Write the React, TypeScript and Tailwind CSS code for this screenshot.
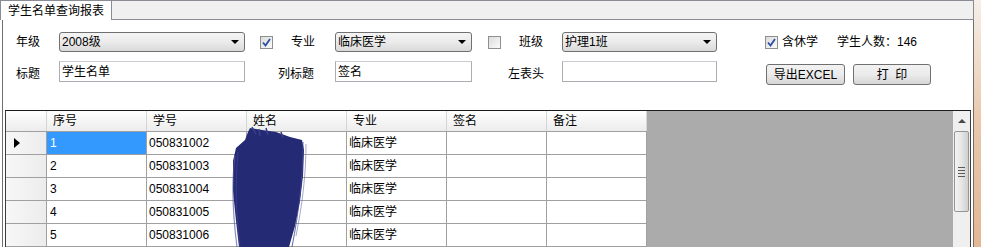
import React from 'react';

const font = "font-['Liberation_Sans','Noto_Sans_CJK_SC',sans-serif]";

const rows = [
  { no: '1', id: '050831002' },
  { no: '2', id: '050831003' },
  { no: '3', id: '050831004' },
  { no: '4', id: '050831005' },
  { no: '5', id: '050831006' },
];

const columns = ['序号', '学号', '姓名', '专业', '签名', '备注'];

function Combo({ value, width }: { value: string; width: string }) {
  return (
    <div
      className={`${width} flex h-[20px] items-center justify-between rounded-[3px] border border-[#707070] bg-gradient-to-b from-[#f4f4f4] via-[#ebebeb] to-[#d9d9d9] pl-[2px] pr-[5px]`}
    >
      <span className="text-[12px] leading-none text-black">{value}</span>
      <span className="h-0 w-0 border-x-[4px] border-t-[4px] border-x-transparent border-t-black" />
    </div>
  );
}

function CheckBox({ checked }: { checked: boolean }) {
  return (
    <div className="flex h-[13px] w-[13px] items-center justify-center border border-[#8e8f8f] bg-gradient-to-br from-[#dcdcdc] to-[#fbfbfb]">
      {checked && (
        <svg width="9" height="9" viewBox="0 0 9 9">
          <path d="M1 4.5 L3.5 7.5 L8 1" fill="none" stroke="#2c4ea3" strokeWidth="1.8" />
        </svg>
      )}
    </div>
  );
}

function TextBox({ value, width }: { value?: string; width: string }) {
  return (
    <div
      className={`${width} flex h-[21px] items-center border border-[#abadb3] border-t-[#c9ccd3] bg-white px-[2px] text-[12px] text-black`}
    >
      {value}
    </div>
  );
}

function Button({ children, width }: { children: React.ReactNode; width: string }) {
  return (
    <div
      className={`${width} flex h-[21px] items-center justify-center rounded-[3px] border border-[#707070] bg-gradient-to-b from-[#f2f2f2] via-[#ebebeb] to-[#d6d6d6] text-[12px] text-black`}
    >
      {children}
    </div>
  );
}

function Scribble() {
  return (
    <svg
      className="pointer-events-none absolute left-[226px] top-[126px]"
      width="86"
      height="121"
      viewBox="0 0 86 121"
    >
      <path
        d="M24 2 L36 4 L50 6 L64 11 L76 14 L78 24 L77 50 L74 75 L69 100 L63 121 L13 121 L10 95 L7 65 L7 35 L10 22 L19 14 L22 6 Z"
        fill="#242a74"
      />
      <path d="M9 30 C5 60 7 90 11 121" stroke="#5a5f9c" strokeWidth="1.2" fill="none" opacity="0.7" />
      <path d="M12 26 C9 55 10 90 14 121" stroke="#3b418a" strokeWidth="1" fill="none" opacity="0.8" />
      <path d="M80 18 C80 50 76 80 70 110" stroke="#6a6fa8" strokeWidth="1" fill="none" opacity="0.6" />
      <path d="M77 16 C77 50 73 85 66 121" stroke="#3e448c" strokeWidth="1" fill="none" opacity="0.8" />
      <path d="M26 1 L30 8 M40 2 L42 9 M55 6 L57 12 M33 3 L34 10" stroke="#3a4088" strokeWidth="1.5" />
    </svg>
  );
}

export default function App() {
  return (
    <div className={`${font} relative flex h-[247px] w-[981px] overflow-hidden bg-white`}>
      <div className="flex w-[974px] flex-col">
        {/* Tab strip */}
        <div className="flex h-[21px]">
          <div className="flex w-[112px] items-center border-x border-t border-[#898c95] bg-white pl-[7px] text-[12px] text-black">
            学生名单查询报表
          </div>
          <div className="flex-1 border-y border-r border-[#898c95] bg-[#f0f0f0]" />
        </div>

        {/* Tab page */}
        <div className="ml-[2px] flex flex-1 flex-col border-x border-[#6f6f6f] pt-[12px]">
          {/* Row 1 */}
          <div className="flex h-[20px] items-center pl-[13px] text-[12px] text-black">
            <span className="w-[43px]">年级</span>
            <Combo value="2008级" width="w-[186px]" />
            <div className="ml-[15px]">
              <CheckBox checked />
            </div>
            <span className="ml-[18px] w-[44px]">专业</span>
            <Combo value="临床医学" width="w-[137px]" />
            <div className="ml-[16px]">
              <CheckBox checked={false} />
            </div>
            <span className="ml-[18px] w-[43px]">班级</span>
            <Combo value="护理1班" width="w-[155px]" />
            <div className="ml-[48px]">
              <CheckBox checked />
            </div>
            <span className="ml-[4px]">含休学</span>
            <span className="ml-[19px]">学生人数：146</span>
          </div>

          {/* Row 2 */}
          <div className="mt-[9px] flex h-[24px] items-start pl-[13px] text-[12px] text-black">
            <span className="mt-[4px] w-[43px]">标题</span>
            <TextBox value="学生名单" width="w-[186px]" />
            <span className="ml-[33px] mt-[4px] w-[57px]">列标题</span>
            <TextBox value="签名" width="w-[137px]" />
            <span className="ml-[36px] mt-[4px] w-[54px]">左表头</span>
            <TextBox width="w-[155px]" />
            <div className="ml-[49px] mt-[3px]">
              <Button width="w-[79px]">导出EXCEL</Button>
            </div>
            <div className="ml-[8px] mt-[3px]">
              <Button width="w-[78px]">打&nbsp;&nbsp;印</Button>
            </div>
          </div>

          {/* Grid */}
          <div className="ml-[2px] mt-[25px] flex w-[966px] flex-1 border-l border-t border-r border-[#3c3c3c] border-t-[#1c1c1c]">
            <div className="flex w-[641px] flex-col bg-white">
              <div className="flex h-[21px] border-b border-[#a0a0a0] bg-gradient-to-b from-white to-[#ececec]">
                <div className="w-[41px] border-r border-[#d5d5d5]" />
                {columns.map((c) => (
                  <div
                    key={c}
                    className="flex w-[100px] items-center border-r border-[#d5d5d5] pl-[6px] text-[12px] text-black"
                  >
                    {c}
                  </div>
                ))}
              </div>
              {rows.map((r, i) => (
                <div key={r.no} className="flex h-[23px] border-b border-[#a0a0a0] text-[12px] text-black">
                  <div className="flex w-[41px] items-center border-r border-[#a0a0a0] bg-gradient-to-r from-[#f7f7f7] to-[#ececec] pl-[8px]">
                    {i === 0 && (
                      <span className="h-0 w-0 border-y-[5px] border-l-[6px] border-y-transparent border-l-black" />
                    )}
                  </div>
                  <div
                    className={`flex w-[100px] items-center border-r border-[#a0a0a0] pl-[3px] ${
                      i === 0 ? 'bg-[#3399ff] text-white' : ''
                    }`}
                  >
                    {r.no}
                  </div>
                  <div className="flex w-[100px] items-center border-r border-[#a0a0a0] pl-[2px]">{r.id}</div>
                  <div className="w-[100px] border-r border-[#a0a0a0]" />
                  <div className="flex w-[100px] items-center border-r border-[#a0a0a0] pl-[2px]">临床医学</div>
                  <div className="w-[100px] border-r border-[#a0a0a0]" />
                  <div className="w-[100px] border-r border-[#a0a0a0]" />
                </div>
              ))}
            </div>
            <div className="w-[306px] bg-[#ababab]" />
            {/* Scrollbar */}
            <div className="flex w-[17px] flex-col items-center bg-[#efefef]">
              <div className="flex h-[20px] w-full items-center justify-center">
                <span className="h-0 w-0 border-x-[4px] border-b-[4px] border-x-transparent border-b-[#4a4a4a]" />
              </div>
              <div className="flex h-[81px] w-[15px] flex-col items-center justify-center gap-[2px] rounded-[2px] border border-[#959595] bg-gradient-to-r from-[#f3f3f3] via-[#e6e6e6] to-[#cfcfcf]">
                <span className="h-px w-[7px] bg-[#5a5a5a]" />
                <span className="h-px w-[7px] bg-[#5a5a5a]" />
                <span className="h-px w-[7px] bg-[#5a5a5a]" />
                <span className="h-px w-[7px] bg-[#5a5a5a]" />
              </div>
            </div>
          </div>
        </div>
      </div>
      {/* Window edge */}
      <div className="w-[7px] bg-gradient-to-b from-[#f6efe9] via-[#e9c7ab] to-[#e2b896]" />

      <Scribble />
    </div>
  );
}
